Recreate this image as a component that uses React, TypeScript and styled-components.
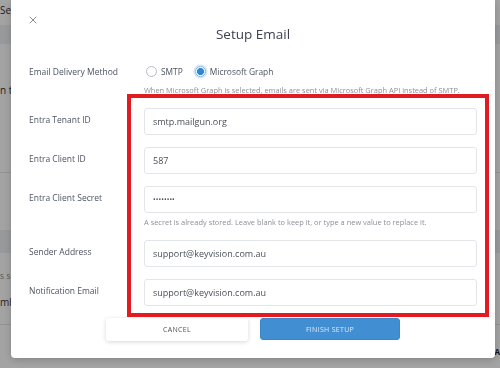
import React from 'react';
import styled, {createGlobalStyle} from 'styled-components';

const GlobalStyle = createGlobalStyle`
  html, body {
    margin: 0;
    padding: 0;
    width: 500px;
    height: 368px;
    overflow: hidden;
    font-family: "Open Sans", "Liberation Sans", sans-serif;
  }
`;

const fields = [
  {label: 'Entra Tenant ID', value: 'smtp.mailgun.org'},
  {label: 'Entra Client ID', value: '587'},
  {
    label: 'Entra Client Secret',
    value: '••••••••',
    secret: true,
    hint: 'A secret is already stored. Leave blank to keep it, or type a new value to replace it.',
  },
  {label: 'Sender Address', value: 'support@keyvision.com.au'},
  {label: 'Notification Email', value: 'support@keyvision.com.au'},
];

export default function App() {
  return (
    <>
      <GlobalStyle />
      <Page>
        <PageRow $height={25}>
          <PageText $top={3}>Ser</PageText>
        </PageRow>
        <PageRow $height={19} $band />
        <PageRow $height={129} $line>
          <PageText $top={39}>n th</PageText>
        </PageRow>
        <PageRow $height={57} />
        <PageRow $height={23} $band />
        <PageRow $height={72} $line>
          <PageCaps>S SE</PageCaps>
          <PageText $top={14}>mb</PageText>
        </PageRow>
        <PageRow $height={33}>
          <PageBold>A</PageBold>
        </PageRow>
      </Page>
      <Overlay />
      <Modal>
        <CloseButton aria-label="Close">
          <svg width="8" height="8" viewBox="0 0 8 8">
            <path d="M1 1L7 7M7 1L1 7" stroke="#8a8d93" strokeWidth="1" strokeLinecap="round" />
          </svg>
        </CloseButton>
        <Title>Setup Email</Title>
        <Form>
          <Field>
            <Label $tight>Email Delivery Method</Label>
            <Control>
              <RadioGroup>
                <RadioOption>
                  <RadioDot />
                  SMTP
                </RadioOption>
                <RadioOption>
                  <RadioDot $checked />
                  Microsoft Graph
                </RadioOption>
              </RadioGroup>
              <Hint $gap={5}>
                When Microsoft Graph is selected, emails are sent via Microsoft Graph API instead of SMTP.
              </Hint>
            </Control>
          </Field>
          {fields.map(f => (
            <Field key={f.label}>
              <Label>{f.label}</Label>
              <Control>
                <Input defaultValue={f.value} $secret={f.secret} readOnly />
                {f.hint && <Hint $gap={3}>{f.hint}</Hint>}
              </Control>
            </Field>
          ))}
        </Form>
        <Actions>
          <CancelButton>Cancel</CancelButton>
          <PrimaryButton>Finish Setup</PrimaryButton>
        </Actions>
        <Highlight />
      </Modal>
    </>
  );
}

const Page = styled.div`
  width: 500px;
  height: 368px;
  background: #fff;
  display: flex;
  flex-direction: column;
`;

const PageRow = styled.div<{$height: number; $band?: boolean; $line?: boolean}>`
  position: relative;
  height: ${p => p.$height}px;
  flex-shrink: 0;
  background: ${p => (p.$band ? '#eef0f2' : 'transparent')};
  border-bottom: ${p => (p.$line ? '1px solid #e6e6e6' : 'none')};
  box-sizing: border-box;
`;

const PageText = styled.div<{$top: number}>`
  padding-top: ${p => p.$top}px;
  font-size: 10px;
  color: #333;
`;

const PageCaps = styled.div`
  padding-top: 19px;
  font-size: 7px;
  letter-spacing: 0.4px;
  color: #777;
`;

const PageBold = styled.div`
  text-align: right;
  padding-right: 0;
  padding-top: 21px;
  font-size: 8px;
  font-weight: 700;
  color: #222;
`;

const Overlay = styled.div`
  position: fixed;
  inset: 0;
  background: rgba(0, 0, 0, 0.36);
`;

const Modal = styled.div`
  position: fixed;
  left: 11px;
  top: 0;
  width: 484px;
  height: 358px;
  box-sizing: border-box;
  padding: 23px 18px 0;
  background: #fff;
  border-radius: 0 0 4px 4px;
  box-shadow: 0 2px 8px rgba(0, 0, 0, 0.2);
`;

const CloseButton = styled.button`
  position: absolute;
  left: 17px;
  top: 15px;
  width: 10px;
  height: 10px;
  padding: 0;
  border: 0;
  background: none;
  display: flex;
  align-items: center;
  justify-content: center;
`;

const Title = styled.h2`
  margin: 0;
  font-size: 13.5px;
  line-height: 22px;
  font-weight: 400;
  text-align: center;
  color: #3b4150;
`;

const Form = styled.div`
  margin-top: 18px;
  display: flex;
  flex-direction: column;
  gap: 12px;
`;

const Field = styled.div`
  display: grid;
  grid-template-columns: 115px 1fr;
`;

const Label = styled.div<{$tight?: boolean}>`
  font-size: 8.5px;
  line-height: ${p => (p.$tight ? '18px' : '24px')};
  color: #4d5361;
`;

const Control = styled.div`
  display: flex;
  flex-direction: column;
`;

const RadioGroup = styled.div`
  display: flex;
  align-items: center;
  gap: 12px;
  height: 16px;
  padding-left: 2px;
`;

const RadioOption = styled.label`
  display: flex;
  align-items: center;
  gap: 4px;
  font-size: 8.4px;
  color: #4d5361;
`;

const RadioDot = styled.span<{$checked?: boolean}>`
  width: 11px;
  height: 11px;
  box-sizing: border-box;
  border-radius: 50%;
  border: 1px solid ${p => (p.$checked ? '#7fb2e0' : '#b9bcc2')};
  background: ${p => (p.$checked ? 'radial-gradient(circle, #2f86d4 0 3.3px, #fff 3.8px)' : '#fff')};
  box-shadow: ${p => (p.$checked ? '0 0 0 1.5px rgba(63, 143, 210, 0.22)' : 'none')};
`;

const Hint = styled.div<{$gap: number}>`
  margin-top: ${p => p.$gap}px;
  font-size: 7.45px;
  line-height: 12px;
  color: #8b8f98;
  white-space: nowrap;
`;

const Input = styled.input<{$secret?: boolean}>`
  height: 27px;
  box-sizing: border-box;
  width: 100%;
  padding: 0 8px;
  border: 1px solid #e3e5e8;
  border-radius: 3px;
  font-family: inherit;
  font-size: ${p => (p.$secret ? '7px' : '9px')};
  letter-spacing: ${p => (p.$secret ? '0.1px' : '0')};
  color: #4a4f58;
  background: #fff;
  outline: none;
`;

const Actions = styled.div`
  margin-top: 12px;
  display: flex;
  justify-content: center;
  align-items: flex-start;
  gap: 12px;
`;

const CancelButton = styled.button`
  width: 142px;
  height: 23px;
  border: 0;
  border-radius: 3px;
  background: #fff;
  box-shadow: 0 1px 4px rgba(0, 0, 0, 0.16);
  font-family: inherit;
  font-size: 7px;
  letter-spacing: 0.3px;
  text-transform: uppercase;
  color: #4a4f58;
`;

const PrimaryButton = styled.button`
  width: 140px;
  height: 22px;
  border: 1px solid #3a86c8;
  border-radius: 3px;
  background: #418fd2;
  font-family: inherit;
  font-size: 7px;
  letter-spacing: 0.3px;
  text-transform: uppercase;
  color: #dbe9f6;
`;

const Highlight = styled.div`
  position: absolute;
  left: 116px;
  top: 94px;
  width: 362px;
  height: 223px;
  box-sizing: border-box;
  border: 4px solid #e21b22;
  pointer-events: none;
`;
